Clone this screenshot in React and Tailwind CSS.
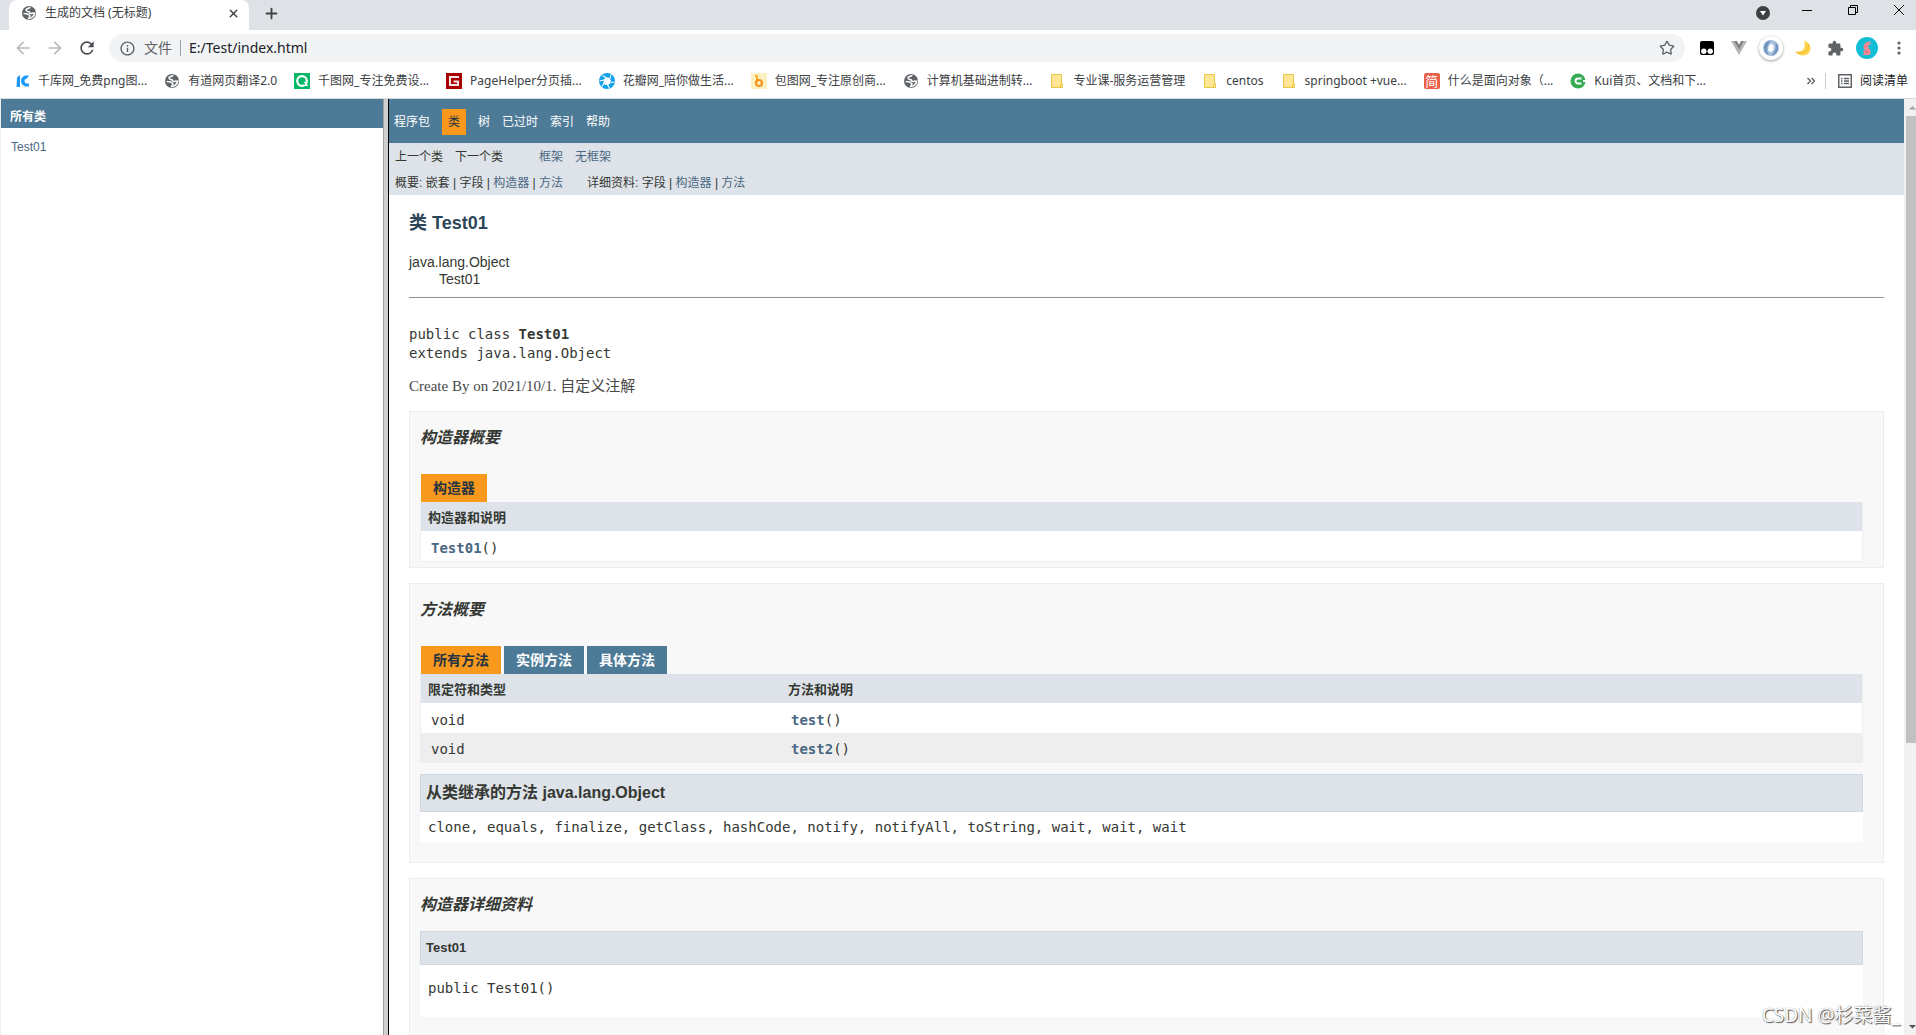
import { Plus, Star, X } from 'lucide-react';
import { MdArrowBack, MdArrowForward, MdExtension, MdInfoOutline, MdRefresh } from 'react-icons/md';

const GlobeIcon = () => (
  <svg viewBox="0 0 16 16" className="w-4 h-4">
    <circle cx="8" cy="8" r="7" fill="#5f6368" />
    <path
      d="M9.5 2.6c-1.6.1-2.2 1-3.4 1.2C5 4 4.6 5.200 5.500 6c.8.6 1.900.2 2.700.9.700.7.2 1.500 1.200 1.700 1 .2 1.400-.7 2.300-.6.8.1 1.500.4 1.900.2-.2 1.900-1.400 3.800-3.300 4.700-.8.3-1.700.5-2.500.5.4-.6.200-1.300.900-1.800.5-.5.3-1.200-.4-1.500-1-.3-1.300-1.200-2.500-1.300-1.200-.1-2.200.1-3.200-.4"
      fill="none"
      stroke="#fff"
      strokeWidth="1.500"
    />
  </svg>
);

const KIcon = () => (
  <svg viewBox="0 0 16 16" className="w-4 h-4">
    <path d="M3 4.500 6 2v12H2.500z" fill="#2196f3" />
    <path d="M15 2.500h-2.500C9 2.500 7 5 7 8s2.500 5.500 5.500 5.500H15v-3h-2c-1.500 0-2.500-1-2.500-2.500S11.500 5.500 13 5.500z" fill="#1a9bff" />
  </svg>
);

const QIcon = () => (
  <svg viewBox="0 0 16 16" className="w-4 h-4">
    <rect width="16" height="16" fill="#05b867" />
    <circle cx="8" cy="8" r="4.800" fill="none" stroke="#fff" strokeWidth="2.200" />
    <path d="M9 9h3l2 4h-3.500z" fill="#fff" />
    <path d="m8.500 9 2.500 2.500" stroke="#05b867" strokeWidth="1.300" />
  </svg>
);

const GIcon = () => (
  <svg viewBox="0 0 16 16" className="w-4 h-4">
    <rect width="16" height="16" fill="#a80000" />
    <path d="M13 4H4v8h8V8.500H7.500" fill="none" stroke="#f4e4e4" strokeWidth="2" />
  </svg>
);

// aperture with six blades
const PetalIcon = () => (
  <svg viewBox="0 0 16 16" className="w-4 h-4">
    <circle cx="8" cy="8" r="8" fill="#12a0ea" />
    <path d="M5 6.500 7 4.500h3l2 3-1 3-2 1.500H6L4.500 9.500z" fill="#fff" />
    <path d="M7.500 5 3.500 2.500M11 6l1-4.500M11.500 9.500l4-.5M8.500 11.500l2 4M5 10l-2 3.500M5 7 .5 8" stroke="#fff" strokeWidth="1.100" />
  </svg>
);

const BIcon = () => (
  <svg viewBox="0 0 16 16" className="w-4 h-4">
    <rect width="16" height="16" fill="#fdf0c0" />
    <path d="M4 3h2v5" fill="none" stroke="#ffb02e" strokeWidth="2" />
    <circle cx="8" cy="10" r="3" fill="none" stroke="#f6931e" strokeWidth="2.200" />
  </svg>
);

const FolderIcon = () => (
  <svg viewBox="0 0 16 16" className="w-4 h-4">
    <path d="M2.500 1.500h10v9h1v4h-11z" fill="#ffe694" stroke="#e8c649" />
    <path d="M11.500 14.500v-3l1-1" fill="none" stroke="#e8c649" />
  </svg>
);

const JianIcon = () => (
  <span className="flex w-4 h-4 items-center justify-center rounded-xs bg-[#e9604a] text-[13px] leading-none text-white">
    简
  </span>
);

const KuiIcon = () => (
  <svg viewBox="0 0 16 16" className="w-4 h-4">
    <circle cx="8" cy="8" r="7.500" fill="#34ab53" />
    <path d="M11.500 5.500H8A2.500 2.500 0 0 0 8 10.500h3.500" fill="none" stroke="#fff" strokeWidth="2" />
    <path d="M13 7h3v2h-3z" fill="#fff" />
  </svg>
);

const bookmarks = [
  { title: '千库网_免费png图...', Icon: KIcon },
  { title: '有道网页翻译2.0', Icon: GlobeIcon },
  { title: '千图网_专注免费设...', Icon: QIcon },
  { title: 'PageHelper分页插...', Icon: GIcon },
  { title: '花瓣网_陪你做生活...', Icon: PetalIcon },
  { title: '包图网_专注原创商...', Icon: BIcon },
  { title: '计算机基础进制转...', Icon: GlobeIcon },
  { title: '专业课-服务运营管理', Icon: FolderIcon },
  { title: 'centos', Icon: FolderIcon },
  { title: 'springboot +vue...', Icon: FolderIcon },
  { title: '什么是面向对象（...', Icon: JianIcon },
  { title: 'Kui首页、文档和下...', Icon: KuiIcon }
];

const TabStrip = () => (
  <div className="flex h-[30px] bg-[#dee1e6]">
    <div className="flex flex-1 pl-[9px]">
      <div className="flex h-[30px] w-60 items-center rounded-t-lg bg-white pb-1 pl-3 pr-2">
        <GlobeIcon />
        <span className="ml-2 flex-1 text-xs text-[#3c4043]">生成的文档 (无标题)</span>
        <button aria-label="关闭标签页" className="flex w-4 h-4 items-center justify-center text-[#3c4043]">
          <X size={13} strokeWidth={2.5} />
        </button>
      </div>
      <button aria-label="新标签页" className="ml-3 flex h-[26px] w-5 items-center justify-center text-[#3c4043]">
        <Plus size={17} strokeWidth={2.5} />
      </button>
    </div>
    <div className="flex h-5 items-center pr-3 text-black">
      <button aria-label="搜索标签页" className="flex w-10 justify-end pt-1.5">
        <svg viewBox="0 0 14 14" className="w-3.5 h-3.5">
          <circle cx="7" cy="7" r="7" fill="#3c4043" />
          <path d="M4 5h6L7 9.500z" fill="#fff" />
        </svg>
      </button>
      <button aria-label="最小化" className="flex w-[42px] justify-end">
        <svg viewBox="0 0 10 10" className="w-2.5 h-2.5">
          <path d="M0 5.500h10" stroke="currentColor" />
        </svg>
      </button>
      <button aria-label="还原" className="flex w-[46px] justify-end">
        <svg viewBox="0 0 10 10" className="w-2.5 h-2.5">
          <path d="M.5 2.500h7v7h-7zM2.500 2.500v-2h7v7h-2" fill="none" stroke="currentColor" />
        </svg>
      </button>
      <button aria-label="关闭" className="flex w-[46px] justify-end">
        <svg viewBox="0 0 10 10" className="w-2.5 h-2.5">
          <path d="m0 0 10 10M10 0 0 10" stroke="currentColor" />
        </svg>
      </button>
    </div>
  </div>
);

const Extensions = () => (
  <div className="flex items-center">
    <button aria-label="Tampermonkey" className="flex w-8 justify-center">
      <svg viewBox="0 0 14 14" className="w-3.5 h-3.5">
        <rect width="14" height="14" rx="2" fill="#000" />
        <circle cx="3.800" cy="10.300" r="2.700" fill="#fff" />
        <circle cx="10.200" cy="10.300" r="2.700" fill="#fff" />
      </svg>
    </button>
    <button aria-label="Vue" className="flex w-8 justify-center">
      <svg viewBox="0 0 16 14" className="w-4 h-3.5">
        <path d="M0 0h16L8 14z" fill="#b5b5b5" />
        <path d="M3.200 0H6l2 3.500L10 0h2.800L8 8.500z" fill="#808080" />
        <path d="M6 0h4L8 3.500z" fill="#fff" />
      </svg>
    </button>
    <button aria-label="JSON" className="flex w-8 justify-center">
      <span className="flex w-6 h-6 items-center justify-center rounded-full bg-white shadow-[0_1px_3px_#0006]">
        <svg viewBox="0 0 16 16" className="w-4 h-4">
          <circle cx="8" cy="8" r="8" fill="#a9c0dc" />
          <path d="M8 .5a7.500 7.500 0 0 0-2 14.500C3 11 3.500 5 8 .5zM8 15.500A7.500 7.500 0 0 0 12 2c2 5 0 11-4 13.500z" fill="#6f94c0" />
          <ellipse cx="8" cy="8" rx="2.600" ry="4" fill="#fff" transform="rotate(15 8 8)" />
        </svg>
      </span>
    </button>
    <button aria-label="夜间模式" className="flex w-8 justify-center">
      <svg viewBox="0 0 16 16" className="w-4 h-4">
        <path d="M9 .5C13 2 15.500 5 15.500 8.500c0 4-3.500 7-7.500 7-3.500 0-6-1.500-7.500-4C6 13 12 9 9 .5z" fill="#fcd34a" />
        <path d="M1 12c5 2.500 13 0 12.500-8" fill="none" stroke="#f5b82e" />
      </svg>
    </button>
    <button aria-label="扩展程序" className="flex w-8 justify-center text-[#5f6368]">
      <MdExtension size={17} />
    </button>
    <button aria-label="个人资料" className="flex w-8 justify-center">
      <svg viewBox="0 0 22 22" className="w-[22px] h-[22px]">
        <circle cx="11" cy="11" r="11" fill="#11bed6" />
        <path
          d="M8.500 7c1.500-2 3.500-2.800 6.500-2.800-.3 1.300-1.800 2-3.200 2.300l3.700-.2c-.5 1.400-2.200 1.900-3.500 2 .6 1.200.2 2.200 1.500 3.700 1.600 2 1.500 4.500 0 6H6.500c.2-1 1-1.300 1.800-1.500L7 14c1-.3 1.800-1 1.500-2-1.500-1-1.500-3.500 0-5z"
          fill="#f58a93"
        />
        <path d="M9 9.500h1M10 13.500l1.500 2" stroke="#b84a5a" />
      </svg>
    </button>
    <button aria-label="更多" className="flex w-8 justify-center">
      <svg viewBox="0 0 4 14" className="w-1 h-3.5" fill="#5f6368">
        <circle cx="2" cy="2" r="1.600" />
        <circle cx="2" cy="7" r="1.600" />
        <circle cx="2" cy="12" r="1.600" />
      </svg>
    </button>
  </div>
);

const Toolbar = () => (
  <div className="flex h-9 items-center bg-white pl-[7px] pr-px">
    <button aria-label="后退" className="flex w-8 justify-center text-[#babcbe]">
      <MdArrowBack size={20} />
    </button>
    <button aria-label="前进" className="flex w-8 justify-center text-[#babcbe]">
      <MdArrowForward size={20} />
    </button>
    <button aria-label="重新加载" className="flex w-8 justify-center text-[#4b4f53]">
      <MdRefresh size={20} />
    </button>
    <div className="ml-1.5 flex h-7 flex-1 items-center rounded-full bg-[#f1f3f4] pl-2.5 pr-2.5">
      <MdInfoOutline size={17} className="text-[#5f6368]" />
      <span className="ml-2 text-sm text-[#5f6368]">文件</span>
      <span className="mx-2 h-4 w-px bg-[#9aa0a6]"></span>
      <input
        aria-label="地址"
        defaultValue="E:/Test/index.html"
        className="flex-1 bg-transparent text-sm text-[#202124] outline-none"
      />
      <button aria-label="收藏" className="text-[#5f6368]">
        <Star size={16} />
      </button>
    </div>
    <div className="pl-1.5">
      <Extensions />
    </div>
  </div>
);

const BookmarksBar = () => (
  <div className="flex h-[33px] items-center justify-between border-b border-[#d5d7da] bg-white pb-0.5 pl-3.5 pr-2 text-xs text-[#3c4043]">
    <nav className="flex gap-[17px]">
      {bookmarks.map(({ title, Icon }) => (
        <a key={title} href="#" className="flex items-center gap-2 whitespace-nowrap">
          <Icon />
          {title}
        </a>
      ))}
    </nav>
    <div className="flex items-center whitespace-nowrap">
      <button aria-label="更多书签">
        <svg viewBox="0 0 8 8" className="w-2 h-2">
          <path d="m.5 1 3 3-3 3M4.500 1l3 3-3 3" fill="none" stroke="#5f6368" strokeWidth="1.400" />
        </svg>
      </button>
      <span className="ml-2.5 mr-3 h-4 w-px bg-[#c8cacd]"></span>
      <button className="flex items-center gap-2 text-[#202124]">
        <svg viewBox="0 0 14 14" className="w-3.5 h-3.5" fill="none" stroke="#5f6368">
          <rect x=".75" y=".75" width="12.500" height="12.500" strokeWidth="1.500" />
          <path d="M3 4.500h1.500M6 4.500h5M3 7h1.500M6 7h5M3 9.500h1.500M6 9.500h5" strokeWidth="1.300" />
        </svg>
        阅读清单
      </button>
    </div>
  </div>
);

const ClassList = () => (
  <aside className="flex w-[382px] flex-col bg-white">
    <h2 className="bg-[#4d7a97] pt-[9px] pb-px pl-[9px] text-xs leading-[19px] font-bold text-white">所有类</h2>
    <ul className="pl-2.5 pt-[11px] text-xs">
      <li>
        <a href="#" className="text-[#4a6782]">Test01</a>
      </li>
    </ul>
  </aside>
);

const DocNav = () => (
  <header className="text-xs text-[#353833]">
    <nav className="flex h-11 items-center gap-3 bg-[#4d7a97] pl-[5px] pt-0.5 text-white">
      <a href="#">程序包</a>
      <span className="bg-[#f8981d] px-1.5 py-[5px] text-[#253441]">类</span>
      <a href="#">树</a>
      <a href="#">已过时</a>
      <a href="#">索引</a>
      <a href="#">帮助</a>
    </nav>
    <div className="bg-[#dee3e9] pl-1.5 pt-px">
      <div className="flex h-[25px] items-center gap-9">
        <div className="flex gap-3">
          <span>上一个类</span>
          <span>下一个类</span>
        </div>
        <div className="flex gap-3 text-[#4a6782]">
          <a href="#">框架</a>
          <a href="#">无框架</a>
        </div>
      </div>
      <div className="flex h-[26px] items-center gap-6 pt-0.5">
        <div>
          概要: 嵌套 | 字段 | <a href="#" className="text-[#4a6782]">构造器</a> |{' '}
          <a href="#" className="text-[#4a6782]">方法</a>
        </div>
        <div>
          详细资料: 字段 | <a href="#" className="text-[#4a6782]">构造器</a> |{' '}
          <a href="#" className="text-[#4a6782]">方法</a>
        </div>
      </div>
    </div>
  </header>
);

const Block = ({ title, children }) => (
  <section className="mb-[15px] border border-[#ededed] bg-[#f8f8f8] pl-2.5 pr-5">
    <h3 className="pt-3.5 pb-3.5 text-base leading-6 font-bold italic">{title}</h3>
    {children}
  </section>
);

const MemberTable = ({ tabs, columns, rows }) => (
  <div className="pt-2.5">
    <div className="flex gap-[3px] pl-px text-sm font-bold">
      {tabs.map((tab, i) => (
        <button
          key={tab}
          className={i === 0
            ? 'h-7 bg-[#f8981d] px-3 text-[#253441]'
            : 'h-7 bg-[#4d7a97] px-3 text-white'}
        >
          {tab}
        </button>
      ))}
    </div>
    <table className="w-full table-fixed border-x border-b border-[#eeeeee] text-left">
      <thead className="bg-[#dee3e9] text-[13px]">
        <tr className="h-[29px]">
          {columns.map((column, i) => (
            <th key={column} className={i === 0 && columns.length > 1 ? 'w-1/4 px-[7px] pt-1' : 'px-[7px] pt-1'}>{column}</th>
          ))}
        </tr>
      </thead>
      <tbody className="font-['DejaVu_Sans_Mono','Noto_Sans_CJK_SC',monospace] text-sm">
        {rows.map(({ type, name }) => (
          <tr key={name} className="h-[30px] bg-white even:bg-[#eeeeef]">
            {type && <td className="px-2.5 pt-1">{type}</td>}
            <td className="px-2.5 pt-1">
              <a href="#" className="font-bold text-[#4a6782]">{name}</a>()
            </td>
          </tr>
        ))}
      </tbody>
    </table>
  </div>
);

const ClassPage = () => (
  <main className="min-w-0 flex-1 bg-white text-sm text-[#353833]">
    <DocNav />
    <div className="px-5">
      <h1 className="pt-3.5 text-lg leading-7 font-bold text-[#2c4557]">类 Test01</h1>
      <ul className="pt-[17px] leading-[17px]">
        <li>java.lang.Object</li>
        <li className="pl-[30px]">Test01</li>
      </ul>
      <hr className="mt-[9px] border-[#8f9290]" />
      <pre className="pt-[27px] font-['DejaVu_Sans_Mono',monospace] leading-[19px]">
        public class <b>Test01</b>{'\n'}extends java.lang.Object
      </pre>
      <p className="pt-3 pb-3.5 font-['Georgia','Liberation_Serif','Noto_Sans_CJK_SC',serif] text-[15px] leading-[22px] text-[#474747]">
        Create By on 2021/10/1. 自定义注解
      </p>

      <Block title="构造器概要">
        <div className="pb-[5px]">
          <MemberTable tabs={['构造器']} columns={['构造器和说明']} rows={[{ name: 'Test01' }]} />
        </div>
      </Block>

      <Block title="方法概要">
        <MemberTable
          tabs={['所有方法', '实例方法', '具体方法']}
          columns={['限定符和类型', '方法和说明']}
          rows={[
            { type: 'void', name: 'test' },
            { type: 'void', name: 'test2' }
          ]}
        />
        <h3 className="mt-[11px] border border-[#d0d9e0] bg-[#dee3e9] px-[5px] text-base leading-9 font-bold">
          从类继承的方法 java.lang.Object
        </h3>
        <div className="mb-5 bg-white px-2 font-['DejaVu_Sans_Mono',monospace] leading-[30px]">
          clone, equals, finalize, getClass, hashCode, notify, notifyAll, toString, wait, wait, wait
        </div>
      </Block>

      <Block title="构造器详细资料">
        <h4 className="border border-[#d0d9e0] bg-[#dee3e9] px-[5px] text-[13px] leading-8 font-bold">Test01</h4>
        <pre className="mb-5 bg-white px-2 pt-3 pb-[18px] font-['DejaVu_Sans_Mono',monospace] leading-[22px]">
          public Test01()
        </pre>
      </Block>
    </div>
  </main>
);

const ScrollBar = () => (
  <div className="flex w-3 flex-col items-end bg-[#f1f1f1]">
    <svg viewBox="0 0 10 17" className="w-2.5 h-[17px]">
      <path d="M3 10.500 6.500 7l3.500 3.500z" fill="#a3a3a3" />
    </svg>
    <div className="h-[67%] w-2.5 bg-[#c1c1c1]"></div>
    <svg viewBox="0 0 10 17" className="mt-auto w-2.5 h-[17px]">
      <path d="M3 7l3.500 3.500L10 7z" fill="#505050" />
    </svg>
  </div>
);

export default function App() {
  return (
    <div className="relative flex h-screen flex-col overflow-hidden bg-white">
      <div className="font-['Noto_Sans','Noto_Sans_CJK_SC',sans-serif]">
        <TabStrip />
        <Toolbar />
        <BookmarksBar />
      </div>

      <div className="flex min-h-0 flex-1 overflow-hidden border-l border-[#eeeeee] font-['Liberation_Sans','Noto_Sans_CJK_SC',sans-serif]">
        <ClassList />
        <div className="w-1.5 border-l border-r border-l-[#a0a0a0] border-r-black bg-[#cfcfcf]"></div>
        <ClassPage />
        <ScrollBar />
      </div>

      <p className="absolute right-4 bottom-1.5 font-['Noto_Sans','Noto_Sans_CJK_SC',sans-serif] text-[19px] text-white [text-shadow:1px_1px_1px_#555,0_0_1px_#777]">
        CSDN @杉菜酱_
      </p>
    </div>
  );
}
